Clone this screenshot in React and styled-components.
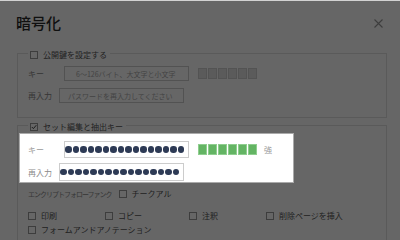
import React from 'react';
import styled, { createGlobalStyle } from 'styled-components';

const GlobalStyle = createGlobalStyle`
  html, body {
    margin: 0;
    padding: 0;
    background: #fff;
  }
  body {
    width: 400px;
    height: 240px;
    overflow: hidden;
    font-family: "Noto Sans CJK JP", "Noto Sans", sans-serif;
  }
`;

const Dialog = styled.div`
  width: 400px;
  height: 240px;
  box-sizing: border-box;
  border-top: 1px solid #d2d2d2;
  background: #fff;
  overflow: hidden;
`;

const Overlay = styled.div`
  position: fixed;
  left: 0;
  right: 0;
  top: 1px;
  bottom: 0;
  background: rgba(0, 0, 0, 0.6);
  z-index: 5;
`;

const Header = styled.div`
  display: flex;
  justify-content: space-between;
  align-items: center;
  padding: 10px 17px 0 16px;
  height: 24px;
`;

const Title = styled.h1`
  margin: 0;
  font-size: 15px;
  font-weight: 500;
  color: #2a2a2a;
  line-height: 20px;
`;

const Close = styled.button`
  border: 0;
  padding: 0;
  background: none;
  width: 9px;
  height: 9px;
  display: flex;
`;

const Group = styled.fieldset`
  margin: ${p => p.$mt}px 13px 0 17px;
  padding: 0 0 ${p => p.$pb}px 10px;
  border: 1px solid #e2e2e2;
  min-width: 0;
`;

const Legend = styled.legend`
  padding: 0 3px 0 2px;
  line-height: 10px;
`;

const Check = styled.label`
  display: inline-flex;
  align-items: center;
  gap: 5px;
  font-size: 8px;
  color: #555;
  line-height: 10px;
  white-space: nowrap;
`;

const Box = styled.span`
  width: 6px;
  height: 6px;
  border: 1px solid #999;
  background: #fff;
  display: inline-flex;
  align-items: center;
  justify-content: center;
  flex-shrink: 0;
`;

const Row = styled.div`
  display: flex;
  align-items: center;
  height: ${p => p.$h}px;
  margin-top: ${p => p.$mt || 0}px;
`;

const Label = styled.span`
  width: ${p => p.$w}px;
  flex-shrink: 0;
  font-size: 8px;
  color: ${p => p.$c || '#888'};
  white-space: nowrap;
`;

const Input = styled.div`
  width: 125px;
  height: ${p => p.$h}px;
  box-sizing: border-box;
  border: 1px solid #ccc;
  background: #fff;
  display: flex;
  align-items: center;
  justify-content: ${p => (p.$dots ? 'flex-end' : 'flex-start')};
  gap: 1.1px;
  overflow: hidden;
  padding: 0 ${p => (p.$dots ? 4 : 0)}px 0 ${p => p.$pl || 0}px;
  font-size: 7px;
  color: #aaa;
  white-space: nowrap;
`;

const Dot = styled.span`
  width: 6.4px;
  height: 6.4px;
  border-radius: 50%;
  background: #2d3a55;
  flex-shrink: 0;
`;

const Meter = styled.div`
  display: flex;
  gap: 1px;
  margin-left: 9px;
`;

const Cell = styled.span`
  width: 9px;
  height: 11px;
  box-sizing: border-box;
  border: 1px solid ${p => (p.$on ? '#8fce8f' : '#d0d0d0')};
  background: ${p => (p.$on ? '#63b463' : '#e4e4e4')};
`;

const Strength = styled.span`
  margin-left: 7px;
  font-size: 8px;
  color: #999;
`;

const Spotlight = styled.div`
  position: relative;
  z-index: 10;
  margin: 1px 0 0 -9px;
  width: 275px;
  box-sizing: border-box;
  background: #fff;
  border: 1px solid #aaa;
  padding: 7px 0 1px 8px;
`;

const Options = styled.div`
  display: grid;
  grid-template-columns: 77px 84px 77px auto;
  row-gap: 4px;
  margin-top: 11px;
`;

const Encrypt = styled.div`
  display: flex;
  align-items: center;
  gap: 7px;
  margin-top: 5px;
  height: 12px;
`;

const EncryptLabel = styled.span`
  font-size: 7px;
  letter-spacing: -1px;
  color: #8a8a8a;
  white-space: nowrap;
`;

const CheckBox = ({ checked }) => (
  <Box>
    {checked && (
      <svg width="6" height="6" viewBox="0 0 6 6">
        <path d="M0.8 3 L2.4 4.6 L5.3 1.2" fill="none" stroke="#444" strokeWidth="1" />
      </svg>
    )}
  </Box>
);

const Dots = ({ n }) => Array.from({ length: n }, (_, i) => <Dot key={i} />);

export default function App() {
  return (
    <Dialog>
      <GlobalStyle />
      <Header>
        <Title>暗号化</Title>
        <Close aria-label="閉じる">
          <svg width="9" height="9" viewBox="0 0 9 9">
            <path d="M0.5 0.5 L8.5 8.5 M8.5 0.5 L0.5 8.5" stroke="#999" strokeWidth="1.1" />
          </svg>
        </Close>
      </Header>

      <Group $mt={12} $pb={14}>
        <Legend>
          <Check>
            <CheckBox />
            公開鍵を設定する
          </Check>
        </Legend>
        <Row $h={15} $mt={6}>
          <Label $w={36}>キー</Label>
          <Input $h={15} $pl={11}>6～126バイト、大文字と小文字</Input>
          <Meter>
            {[0, 1, 2, 3, 4, 5].map(i => <Cell key={i} />)}
          </Meter>
        </Row>
        <Row $h={15} $mt={7}>
          <Label $w={31}>再入力</Label>
          <Input $h={15} $pl={8}>パスワードを再入力してください</Input>
        </Row>
      </Group>

      <Group $mt={0} $pb={30}>
        <Legend>
          <Check>
            <CheckBox checked />
            セット編集と抽出キー
          </Check>
        </Legend>
        <Spotlight>
          <Row $h={17}>
            <Label $w={36} $c="#9a9a9a">キー</Label>
            <Input $h={17} $dots>
              <Dots n={17} />
            </Input>
            <Meter>
              {[0, 1, 2, 3, 4, 5].map(i => <Cell key={i} $on />)}
            </Meter>
            <Strength>強</Strength>
          </Row>
          <Row $h={18} $mt={5}>
            <Label $w={31} $c="#8a8a8a">再入力</Label>
            <Input $h={18} $dots>
              <Dots n={17} />
            </Input>
          </Row>
        </Spotlight>
        <Encrypt>
          <EncryptLabel>エンクリプトフォローファンク</EncryptLabel>
          <Check>
            <CheckBox />
            チークアル
          </Check>
        </Encrypt>
        <Options>
          <Check><CheckBox />印刷</Check>
          <Check><CheckBox />コピー</Check>
          <Check><CheckBox />注釈</Check>
          <Check><CheckBox />削除ページを挿入</Check>
          <Check><CheckBox />フォームアンドアノテーション</Check>
        </Options>
      </Group>
      <Overlay />
    </Dialog>
  );
}
